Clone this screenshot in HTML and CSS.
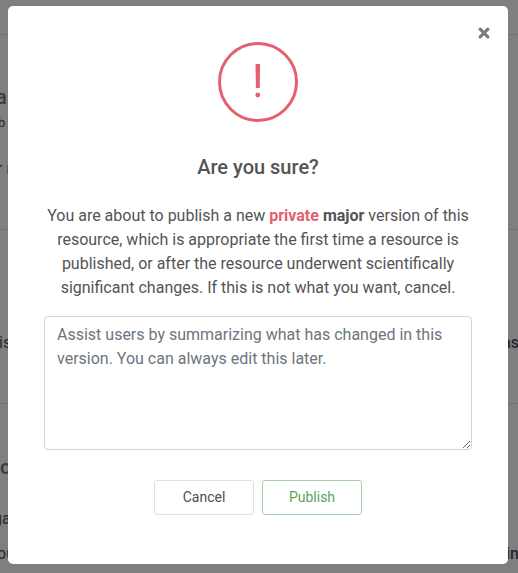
FILE: index.html
```html
<!DOCTYPE html>
<html lang="en">
<head>
<meta charset="utf-8">
<title>Publish</title>
<link rel="stylesheet" href="styles.css">
</head>
<body>
<main class="page">
  <div class="row row-top"></div>
  <div class="row row-title"><span class="heading s-a">a</span></div>
  <div class="row row-sub"><span class="small s-b">b</span></div>
  <div class="row row-meta"><span class="s-r">r n</span></div>
  <div class="row row-info"><span class="s-is">is</span><span class="e-as">as</span></div>
  <div class="row row-section"><span class="heading s-o">o</span></div>
  <div class="row row-line"><span class="s-ga">ga</span></div>
  <div class="row row-last"><span class="s-ou">ou</span><span class="e-in">in</span></div>
</main>
<div class="backdrop">
  <section class="modal" role="dialog" aria-labelledby="title">
    <button class="close" aria-label="Close">
      <svg width="12" height="12" viewBox="0 0 12 12"><path d="M2.2 2.2 9.8 9.8M9.8 2.2 2.2 9.8"/></svg>
    </button>
    <svg class="warning" width="80" height="80" viewBox="0 0 80 80">
      <circle class="ring" cx="40" cy="40" r="38.5"/>
      <path class="mark" d="M37.5 22h4.6l-.4 24h-3.8z"/>
      <circle class="mark" cx="39.8" cy="53" r="2.4"/>
    </svg>
    <h1 id="title" class="title">Are you sure?</h1>
    <p class="message">You are about to publish a new <strong class="danger">private</strong> <strong>major</strong> version of this resource, which is appropriate the first time a resource is published, or after the resource underwent scientifically significant changes. If this is not what you want, cancel.</p>
    <textarea class="notes" placeholder="Assist users by summarizing what has changed in this version. You can always edit this later."></textarea>
    <div class="actions">
      <button class="btn">Cancel</button>
      <button class="btn publish">Publish</button>
    </div>
  </section>
</div>
</body>
</html>
```
FILE: styles.css
```css
* { box-sizing: border-box; }
body {
  margin: 0;
  overflow: hidden;
  background: #fff;
  color: #545454;
  font: 16px/24px Roboto, "Liberation Sans", sans-serif;
}
.page {
  width: 518px;
  height: 573px;
  overflow: hidden;
  color: #505050;
}
.row {
  display: flex;
  justify-content: space-between;
  white-space: nowrap;
}
.row-top { height: 35px; border-bottom: 1px solid #e0e0e0; }
.row-title { height: 76px; padding-top: 50px; }
.row-sub { height: 46px; }
.row-meta { height: 73px; border-bottom: 1px solid #e0e0e0; }
.row-info { height: 174px; padding-top: 101px; border-bottom: 1px solid #e0e0e0; }
.row-section { height: 103px; padding-top: 51px; }
.row-line { height: 35px; }
.row-last { height: 31px; }
.heading { color: #68788e; font-size: 20px; font-weight: 500; }
.small { font-size: 13px; }
.s-a { margin-left: -4px; }
.s-b { margin-left: -2px; }
.s-r { margin-left: -3px; }
.s-is { margin-left: -1px; }
.s-ga { margin-left: -7px; }
.s-ou { margin-left: -3px; }
.e-as { margin-right: -1px; font-weight: 500; }
.e-in { margin-right: -1px; font-weight: 500; }
.backdrop {
  position: fixed;
  inset: 0;
  padding: 6px 10px 9px 8px;
  background: rgba(0, 0, 0, .5);
}
.modal {
  position: relative;
  display: flex;
  flex-direction: column;
  align-items: center;
  width: 500px;
  height: 558px;
  padding: 36px 36px 0;
  border-radius: 5px;
  background: #fff;
}
.close {
  position: absolute;
  top: 21px;
  right: 18.5px;
  padding: 0;
  border: 0;
  background: none;
  line-height: 0;
}
.close path { fill: none; stroke: #7b7b7b; stroke-width: 3.2; stroke-linecap: round; }
.warning { flex: none; }
.ring { fill: none; stroke: #e5606e; stroke-width: 3; }
.mark { fill: #e5606e; }
.title {
  margin: 33px 0 0;
  font-size: 20px;
  font-weight: 500;
  line-height: 24px;
}
.message {
  width: 428px;
  margin: 25px 0 0;
  text-align: center;
}
.danger { color: #e5606e; }
.notes {
  flex: none;
  width: 428px;
  height: 134px;
  margin: 16px 0 0;
  padding: 6px 12px;
  border: 1px solid #ced4da;
  border-radius: 4px;
  background: #fff;
  font: inherit;
  resize: vertical;
}
.notes::placeholder { color: #6c757d; opacity: 1; }
.actions { display: flex; gap: 8px; margin-top: 30px; }
.btn {
  width: 100px;
  height: 35px;
  padding: 0;
  border: 1px solid #dee2e6;
  border-radius: 3px;
  background: #fff;
  color: #495057;
  font: 14px/21px Roboto, "Liberation Sans", sans-serif;
}
.publish { border-color: #a6d1a7; color: #5aa55c; }
```
